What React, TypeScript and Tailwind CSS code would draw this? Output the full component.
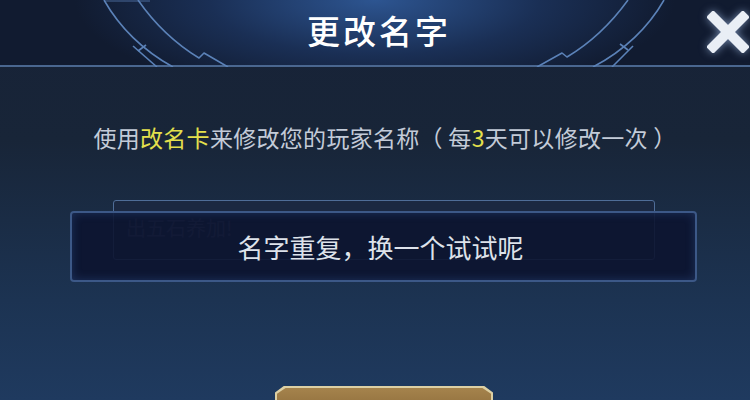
import React from 'react'

const cjk = '"Noto Sans CJK SC", "Noto Sans", sans-serif'

const HeaderOrnament = () => (
  <svg className="absolute inset-0 pointer-events-none" width="750" height="67" viewBox="0 0 750 67" fill="none">
    <g stroke="#5b82b8" strokeWidth="1.6" strokeLinejoin="round">
      {/* left */}
      <path d="M104 0 Q 128 42 173 67" />
      <path d="M138 0 Q 163 36 199 58 L204 53 L228 67" />
      <path d="M133 46 L157 67" />
      <path d="M138 51 L146 45" />
      <path d="M104 1 L150 1" opacity="0.5" />
      {/* right */}
      <path d="M664 0 Q 640 42 593 67" />
      <path d="M628 0 Q 602 36 567 57 L562 53 L537 67" />
      <path d="M633 46 L612 67" />
      <path d="M628 50 L620 44" />
    </g>
  </svg>
)

const CloseIcon = () => (
  <svg width="42" height="42" viewBox="0 0 42 42" className="drop-shadow-[0_0_4px_rgba(180,210,255,0.6)]">
    <g fill="#e9eef5">
      <rect x="-5" y="16" width="52" height="10" transform="rotate(45 21 21)" />
      <rect x="-5" y="16" width="52" height="10" transform="rotate(-45 21 21)" />
    </g>
  </svg>
)

export default function App() {
  return (
    <div
      className="relative w-[750px] h-[400px] overflow-hidden bg-[linear-gradient(180deg,#172237_0%,#182538_35%,#1c3352_75%,#1f3a5f_100%)]"
      style={{ fontFamily: cjk }}
    >
      {/* header */}
      <div className="relative h-[67px] border-b-2 border-[#4a6790] bg-[radial-gradient(ellipse_300px_100px_at_50%_0%,#2d5591_0%,#1a2f55_55%,#111b30_100%)]">
        <HeaderOrnament />
        <div className="flex h-full items-center justify-center pb-[4px] pl-[8px]">
          <h1 className="text-[33px] font-medium leading-none tracking-[3px] text-white">更改名字</h1>
        </div>
        <button className="absolute right-[1px] top-[11px]" aria-label="关闭">
          <CloseIcon />
        </button>
      </div>

      {/* body */}
      <div className="flex flex-col items-center">
        <p className="mt-[54px] ml-[20px] text-[23px] font-normal leading-[33px] tracking-[0.3px] text-[#c3cbd8]">
          使用<span className="text-[#e4e04c]">改名卡</span>来修改您的玩家名称（ 每
          <span className="text-[#e4e04c]">3</span>天可以修改一次 ）
        </p>

        <div className="relative mt-[46px] ml-[17px] h-[82px] w-[627px]">
          {/* name input (behind) */}
          <div className="absolute left-[43px] top-0 h-[60px] w-[542px] rounded-[3px] border border-[#4f6d98] bg-[#1b2841] px-[12px] pt-[16px]">
            <span className="text-[20px] leading-none text-[#4a5772]">出五石养加!</span>
          </div>

          {/* toast */}
          <div className="absolute left-0 top-[11px] flex h-[71px] w-[627px] items-center justify-center rounded-[4px] border-2 border-[#3c5887] bg-[#0c1430]/[0.9] shadow-[inset_0_0_10px_rgba(60,100,170,0.35)]">
            <span className="ml-[-6px] text-[26px] font-normal leading-none text-[#dde2ea]">名字重复，换一个试试呢</span>
          </div>
        </div>

        {/* confirm button (cut off) */}
        <div className="mt-[104px] ml-[18px] h-[30px] w-[218px] bg-[#ddd0a4] p-[2px] [clip-path:polygon(4%_0,96%_0,100%_22%,100%_100%,0_100%,0_22%)]">
          <div className="h-full w-full bg-[linear-gradient(180deg,#a5834c_0%,#8c6b3a_100%)] [clip-path:polygon(4%_0,96%_0,100%_22%,100%_100%,0_100%,0_22%)]" />
        </div>
      </div>
    </div>
  )
}
